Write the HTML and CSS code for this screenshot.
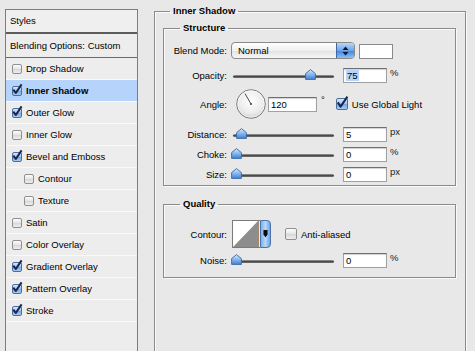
FILE: index.html
```html
<!DOCTYPE html>
<html>
<head>
  <title>Layer Style - Inner Shadow</title>
  <link rel="stylesheet" href="styles.css">
</head>
<body>
  <svg class="defs" width="0" height="0">
    <defs>
      <linearGradient id="thumbGrad" x1="0" y1="0" x2="0" y2="1">
        <stop offset="0" stop-color="#dbeafb"/>
        <stop offset="0.45" stop-color="#8dbcf0"/>
        <stop offset="1" stop-color="#3f82d8"/>
      </linearGradient>
      <radialGradient id="dialGrad" cx="0.5" cy="0.4" r="0.6">
        <stop offset="0" stop-color="#ffffff"/>
        <stop offset="0.7" stop-color="#ececec"/>
        <stop offset="1" stop-color="#cfcfcf"/>
      </radialGradient>
    </defs>
  </svg>

  <div class="window">
    <div class="styles-panel">
      <div class="panel-head">Styles</div>
      <div class="panel-blend">Blending Options: Custom</div>
      <ul class="style-list">
        <li><span class="cb"></span>Drop Shadow</li>
        <li class="selected"><span class="cb on"><svg viewBox="0 0 10 11" width="10" height="11"><path d="M1.3 5.6 L3.8 9 L9.6 0.4" /></svg></span>Inner Shadow</li>
        <li><span class="cb on"><svg viewBox="0 0 10 11" width="10" height="11"><path d="M1.3 5.6 L3.8 9 L9.6 0.4" /></svg></span>Outer Glow</li>
        <li><span class="cb"></span>Inner Glow</li>
        <li><span class="cb on"><svg viewBox="0 0 10 11" width="10" height="11"><path d="M1.3 5.6 L3.8 9 L9.6 0.4" /></svg></span>Bevel and Emboss</li>
        <li class="sub"><span class="cb"></span>Contour</li>
        <li class="sub"><span class="cb"></span>Texture</li>
        <li><span class="cb"></span>Satin</li>
        <li><span class="cb"></span>Color Overlay</li>
        <li><span class="cb on"><svg viewBox="0 0 10 11" width="10" height="11"><path d="M1.3 5.6 L3.8 9 L9.6 0.4" /></svg></span>Gradient Overlay</li>
        <li><span class="cb on"><svg viewBox="0 0 10 11" width="10" height="11"><path d="M1.3 5.6 L3.8 9 L9.6 0.4" /></svg></span>Pattern Overlay</li>
        <li><span class="cb on"><svg viewBox="0 0 10 11" width="10" height="11"><path d="M1.3 5.6 L3.8 9 L9.6 0.4" /></svg></span>Stroke</li>
      </ul>
    </div>

    <fieldset class="group outer">
      <legend>Inner Shadow</legend>

      <fieldset class="group structure">
        <legend>Structure</legend>

        <div class="row row-blend">
          <span class="lbl">Blend Mode:</span>
          <div class="select">
            <span class="select-text">Normal</span>
            <span class="stepper">
              <svg viewBox="0 0 7 10" width="7" height="10"><path d="M3.5 0.5 L6.5 4 L0.5 4 Z M3.5 9.5 L6.5 6 L0.5 6 Z" /></svg>
            </span>
          </div>
          <span class="swatch"></span>
        </div>

        <div class="row row-opacity">
          <span class="lbl">Opacity:</span>
          <div class="slider">
            <div class="track"></div>
            <div class="lane">
              <svg class="thumb" style="left:75%" viewBox="0 0 11 11" width="11" height="11"><path d="M5.5 0.6 L10.4 4.6 L10.4 10.4 L0.6 10.4 L0.6 4.6 Z" /></svg>
            </div>
          </div>
          <span class="field"><span class="sel">75</span></span>
          <span class="unit">%</span>
        </div>

        <div class="row row-angle">
          <span class="lbl">Angle:</span>
          <svg class="dial" viewBox="0 0 30 30" width="30" height="30">
            <circle cx="15" cy="15" r="14.3" fill="url(#dialGrad)" stroke="#7c7c7c" stroke-width="1"/>
            <circle cx="15" cy="15" r="13.2" fill="none" stroke="#ffffff" stroke-width="0.8" opacity="0.8"/>
            <line x1="15" y1="15" x2="9" y2="4.6" stroke="#4a4a4a" stroke-width="1"/>
            <circle cx="15" cy="15" r="1.1" fill="#4a4a4a"/>
          </svg>
          <span class="field field-angle">120</span>
          <span class="deg">°</span>
          <span class="cb big on"><svg viewBox="0 0 12 13" width="12" height="13"><path d="M1.8 6.4 L4.6 10.6 L11.4 0.6" /></svg></span>
          <span class="cb-label">Use Global Light</span>
        </div>

        <div class="row row-distance">
          <span class="lbl">Distance:</span>
          <div class="slider">
            <div class="track"></div>
            <div class="lane">
              <svg class="thumb" style="left:5%" viewBox="0 0 11 11" width="11" height="11"><path d="M5.5 0.6 L10.4 4.6 L10.4 10.4 L0.6 10.4 L0.6 4.6 Z" /></svg>
            </div>
          </div>
          <span class="field">5</span>
          <span class="unit">px</span>
        </div>

        <div class="row">
          <span class="lbl">Choke:</span>
          <div class="slider">
            <div class="track"></div>
            <div class="lane">
              <svg class="thumb" style="left:0%" viewBox="0 0 11 11" width="11" height="11"><path d="M5.5 0.6 L10.4 4.6 L10.4 10.4 L0.6 10.4 L0.6 4.6 Z" /></svg>
            </div>
          </div>
          <span class="field">0</span>
          <span class="unit">%</span>
        </div>

        <div class="row">
          <span class="lbl">Size:</span>
          <div class="slider">
            <div class="track"></div>
            <div class="lane">
              <svg class="thumb" style="left:0%" viewBox="0 0 11 11" width="11" height="11"><path d="M5.5 0.6 L10.4 4.6 L10.4 10.4 L0.6 10.4 L0.6 4.6 Z" /></svg>
            </div>
          </div>
          <span class="field">0</span>
          <span class="unit">px</span>
        </div>
      </fieldset>

      <fieldset class="group quality">
        <legend>Quality</legend>

        <div class="row row-contour">
          <span class="lbl">Contour:</span>
          <span class="contour">
            <svg viewBox="0 0 26 26" width="26" height="26">
              <rect x="0" y="0" width="26" height="26" fill="#ffffff"/>
              <path d="M0 26 L25 0 L26 0 L26 26 Z" fill="#8d8d8d"/>
              <line x1="25.5" y1="0" x2="25.5" y2="26" stroke="#a8876a" stroke-width="1"/>
            </svg>
          </span>
          <span class="contour-drop">
            <svg viewBox="0 0 11 28" width="9" height="26"><path d="M3 9 L8 9 L8 14.5 L5.5 18 L3 14.5 Z" /></svg>
          </span>
          <span class="cb big aa"></span>
          <span class="cb-label">Anti-aliased</span>
        </div>

        <div class="row row-noise">
          <span class="lbl">Noise:</span>
          <div class="slider">
            <div class="track"></div>
            <div class="lane">
              <svg class="thumb" style="left:0%" viewBox="0 0 11 11" width="11" height="11"><path d="M5.5 0.6 L10.4 4.6 L10.4 10.4 L0.6 10.4 L0.6 4.6 Z" /></svg>
            </div>
          </div>
          <span class="field">0</span>
          <span class="unit">%</span>
        </div>
      </fieldset>
    </fieldset>
  </div>
</body>
</html>
```

FILE: styles.css
```css
html, body {
  margin: 0;
  padding: 0;
}

body {
  font-family: "Liberation Sans", Arial, sans-serif;
  font-size: 9.5px;
  color: #000;
  background-color: #e8e8e8;
  height: 351px;
  overflow: hidden;
}

.defs {
  display: block;
  width: 0;
  height: 0;
}

.window {
  display: flex;
  align-items: flex-start;
  height: 351px;
}

/* left styles list */
.styles-panel {
  flex: none;
  width: 133px;
  height: 342px;
  margin: 9px 0 0 5px;
  box-sizing: border-box;
  border: 1px solid #7d7d7d;
  border-bottom: none;
  background-color: #ededed;
}

.panel-head {
  height: 22px;
  line-height: 22px;
  padding-left: 4px;
  background-color: #efefef;
  border-bottom: 2px solid #5c5c5c;
}

.panel-blend {
  height: 23px;
  line-height: 23px;
  padding-left: 4px;
  border-bottom: 1px solid #6a6a6a;
}

.style-list {
  list-style: none;
  margin: 0;
  padding: 0;
}

.style-list li {
  display: flex;
  align-items: center;
  height: 21px;
  padding-left: 6px;
  border-bottom: 1px solid #f9f9f9;
}

.style-list li.sub {
  padding-left: 18px;
}

.style-list li.selected {
  background-color: #b6d4fb;
  font-weight: bold;
}

/* checkboxes */
.cb {
  flex: none;
  display: inline-block;
  width: 10px;
  height: 10px;
  box-sizing: border-box;
  margin-right: 4px;
  border: 1px solid #8f8f8f;
  border-radius: 2px;
  background: linear-gradient(#fdfdfd, #e4e4e4 50%, #d6d6d6 51%, #efefef);
}

.cb.on {
  border-color: #4d6d9b;
  background: linear-gradient(#dbe9fb, #9cc3ee 50%, #6fa6e6 51%, #a9cdf3);
}

.cb svg {
  display: block;
  margin: -3px 0 0 -1px;
  overflow: visible;
}

.cb svg path {
  fill: none;
  stroke: #17264f;
  stroke-width: 2;
  stroke-linejoin: round;
}

.cb.big {
  width: 12px;
  height: 12px;
}

/* fieldsets */
.group {
  margin: 0;
  min-width: 0;
  box-sizing: border-box;
  border: 1px solid #8b8b8b;
  box-shadow: inset 1px 1px 0 #fafafa, 1px 1px 0 #fafafa;
}

.group legend {
  padding: 0 3px;
  line-height: 12px;
  font-weight: bold;
}

.outer {
  flex: none;
  width: 312px;
  height: 346px;
  margin: 5px 0 0 16px;
  padding: 5px 9px 0 8px;
  border-bottom: none;
}

.outer > legend {
  margin-left: 7px;
}

.structure,
.quality {
  width: 293px;
  padding: 8px 0 3px 0;
}

.structure > legend,
.quality > legend {
  margin-left: 16px;
}

.quality {
  margin-top: 12px;
  padding: 10px 0 9px 0;
}

/* rows */
.row {
  display: flex;
  align-items: center;
  height: 16px;
  margin-top: 4px;
}

.row-blend {
  height: 17px;
  margin-top: 0;
}

.row-opacity {
  margin-top: 8px;
}

.row-angle {
  height: 30px;
  margin-top: 6px;
}

.row-distance {
  margin-top: 7px;
}

.row-contour {
  height: 28px;
  margin-top: 0;
}

.lbl {
  flex: none;
  width: 63px;
  text-align: right;
}

/* popup select */
.select {
  flex: none;
  display: flex;
  align-items: stretch;
  width: 124px;
  height: 17px;
  box-sizing: border-box;
  margin-left: 4px;
  padding-left: 6px;
  border: 1px solid #8a8a8a;
  border-radius: 4px;
  overflow: hidden;
  background: linear-gradient(#ffffff, #f0f0f0 50%, #e2e2e2 51%, #f6f6f6);
}

.select-text {
  flex: 1;
  line-height: 15px;
}

.stepper {
  flex: none;
  width: 17px;
  display: flex;
  align-items: center;
  justify-content: center;
  border-left: 1px solid #3e69a6;
  background: linear-gradient(#b9d6f6, #6ea5ea 50%, #3f82df 51%, #8cc0f3);
}

.stepper svg path {
  fill: #0e1b36;
}

.swatch {
  flex: none;
  width: 34px;
  height: 15px;
  box-sizing: border-box;
  margin-left: 4px;
  margin-top: 2px;
  border: 1px solid #8a8a8a;
  background-color: #fff;
}

/* sliders */
.slider {
  flex: none;
  position: relative;
  width: 103px;
  height: 16px;
  box-sizing: border-box;
  margin-left: 6px;
  padding-top: 8px;
}

.track {
  height: 3px;
  margin-right: 2px;
  border-radius: 2px;
  background: linear-gradient(#a2a2a2, #414141 55%, #7c7c7c);
}

.lane {
  position: absolute;
  top: 2px;
  left: 3px;
  width: 99px;
  height: 11px;
}

.thumb {
  position: absolute;
  top: 0;
  margin-left: -5px;
}

.thumb path {
  fill: url(#thumbGrad);
  stroke: #3a66a4;
  stroke-width: 0.9;
}

/* text fields */
.field {
  flex: none;
  display: block;
  width: 44px;
  height: 15px;
  box-sizing: border-box;
  margin-left: 7px;
  padding-left: 2px;
  line-height: 13px;
  border: 1px solid #a0a0a0;
  border-top-color: #6f6f6f;
  background-color: #fff;
  box-shadow: inset 0 1px 1px rgba(0, 0, 0, 0.18);
}

.sel {
  background-color: #b5d5ff;
  padding: 0 1px;
}

.unit {
  flex: none;
  align-self: flex-start;
  margin-left: 3px;
  line-height: 12px;
  color: #222;
}

/* angle */
.dial {
  flex: none;
  display: block;
  margin-left: 9px;
}

.field-angle {
  width: 49px;
  margin-left: 2px;
}

.deg {
  flex: none;
  align-self: flex-start;
  margin: 6px 0 0 4px;
  line-height: 10px;
}

.row-angle .cb {
  margin-left: 11px;
}

.cb-label {
  flex: none;
}

/* contour */
.contour {
  flex: none;
  display: block;
  width: 28px;
  height: 28px;
  box-sizing: border-box;
  margin-left: 5px;
  border: 1px solid #7a7a7a;
  border-right: none;
}

.contour svg {
  display: block;
}

.contour-drop {
  flex: none;
  display: flex;
  align-items: center;
  justify-content: center;
  width: 11px;
  height: 28px;
  box-sizing: border-box;
  border: 1px solid #4a74ad;
  border-radius: 0 4px 4px 0;
  background: linear-gradient(90deg, #7fb0ec, #b9d7f7 50%, #6fa3e6);
}

.contour-drop svg path {
  fill: #0b0b0b;
}

.cb.aa {
  margin-left: 14px;
}
```
